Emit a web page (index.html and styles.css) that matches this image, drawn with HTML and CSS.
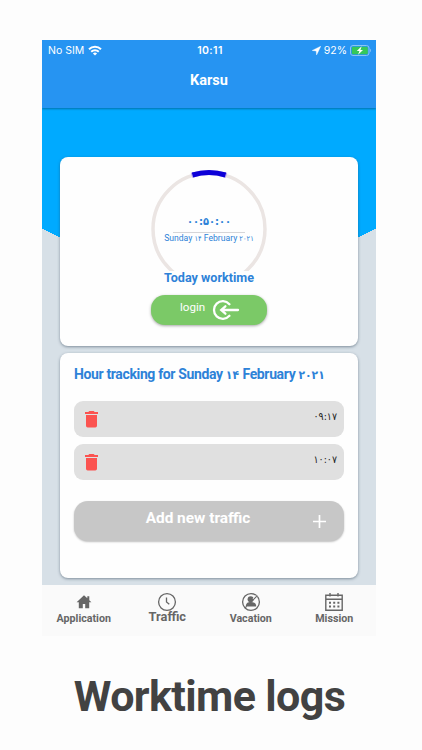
FILE: index.html
```html
<!DOCTYPE html>
<html lang="en">
  <head>
    <meta charset="UTF-8" />
    <meta name="viewport" content="width=device-width, initial-scale=1.0" />
    <title>Karsu</title>
    <link rel="stylesheet" href="styles.css">
  </head>
  <body>
    <div class="phone">
      <header class="header">
        <div class="status">
          <div class="carrier">
            <span>No SIM</span>
            <svg width="14" height="11" viewBox="0 0 14 11" fill="none" stroke="#fff" stroke-width="2">
              <path d="M1 4.2a8.6 8.6 0 0 1 12 0M3.2 6.7a5.4 5.4 0 0 1 7.6 0" />
              <path d="M7 10.6L4.9 8.5a3 3 0 0 1 4.2 0z" fill="#fff" stroke="none" />
            </svg>
          </div>
          <span class="clock">10:11</span>
          <div class="power">
            <svg width="9" height="9" viewBox="0 0 9 9"><path d="M8.8.2L.2 4.5l4 .4.4 4z" fill="#fff" stroke="#fff" stroke-width=".4" /></svg>
            <span>92%</span>
            <svg width="22" height="11" viewBox="0 0 22 11">
              <rect x=".5" y=".5" width="18.5" height="10" rx="2.5" fill="none" stroke="#8cc4f5" />
              <rect x="1.8" y="1.8" width="16" height="7.4" rx="1.2" fill="#35c759" />
              <path d="M20 3.8c1.2.3 1.2 3.1 0 3.4z" fill="#8cc4f5" />
              <path d="M11.7 1.2L6.8 6h2.6l-1.3 3.8L13 5h-2.6z" fill="#fff" />
            </svg>
          </div>
        </div>
        <h1 class="title">Karsu</h1>
      </header>
      <main class="content">
        <section class="card today">
          <div class="dial">
            <svg class="ring" width="118" height="102" viewBox="0 0 118 102" fill="none">
              <circle cx="59" cy="60" r="56" stroke="#ebe5e3" stroke-width="3.5" />
              <path d="M41.5 6.3A56.5 56.5 0 0 1 76.5 6.3" stroke="#b9a5ee" stroke-width="5" />
              <path d="M42.5 6A56.5 56.5 0 0 1 75.5 6" stroke="#0d00d8" stroke-width="5" />
            </svg>
            <div class="reading">
              <div class="timer fa">۰۰:۵۰:۰۰</div>
              <div class="date">Sunday <span class="fa">۱۴</span> February <span class="fa">۲۰۲۱</span></div>
            </div>
          </div>
          <h2 class="caption">Today worktime</h2>
          <button class="login">
            <span>login</span>
            <svg width="28" height="20" viewBox="0 0 28 20" fill="none" stroke="#fff" stroke-width="2.3" stroke-linecap="round">
              <path d="M17.4 15.8A8.8 8.8 0 1 1 17.4 4.2" />
              <path d="M26 10H9.4M13.4 6.3L9.2 10l4.2 3.7" />
            </svg>
          </button>
        </section>
        <section class="card tracking">
          <h2 class="heading">Hour tracking for Sunday <span class="fa">۱۴</span> February <span class="fa">۲۰۲۱</span></h2>
          <ul class="logs">
            <li class="log">
              <svg width="13" height="17" viewBox="0 0 13 17" fill="#fb5350"><path d="M0 1h3.3L4.3 0h4.4l1 1H13v2H0zM1 4h11v10.7A1.7 1.7 0 0 1 10.3 16.4H2.7A1.7 1.7 0 0 1 1 14.7z" /></svg>
              <span class="fa">۰۹:۱۷</span>
            </li>
            <li class="log">
              <svg width="13" height="17" viewBox="0 0 13 17" fill="#fb5350"><path d="M0 1h3.3L4.3 0h4.4l1 1H13v2H0zM1 4h11v10.7A1.7 1.7 0 0 1 10.3 16.4H2.7A1.7 1.7 0 0 1 1 14.7z" /></svg>
              <span class="fa">۱۰:۰۷</span>
            </li>
          </ul>
          <button class="add">
            <span>Add new traffic</span>
            <svg width="13" height="13" viewBox="0 0 13 13" stroke="#fff" stroke-width="1.7"><path d="M6.5 0v13M0 6.5h13" /></svg>
          </button>
        </section>
      </main>
      <nav class="tabs">
        <a class="tab">
          <svg width="20" height="20" viewBox="0 0 20 20" fill="#666"><path d="M10 3.2L2.6 10.2h2.2V16.3h4v-4.4h2.4v4.4h4v-6.1h2.2L15.3 8.2V4.2h-2v2.1z" /></svg>
          <span>Application</span>
        </a>
        <a class="tab current">
          <svg width="20" height="20" viewBox="0 0 20 20" fill="none" stroke="#666" stroke-width="1.3"><circle cx="10" cy="10" r="8.4" /><path d="M9.5 5.4V10l2.8 2.3" /></svg>
          <span>Traffic</span>
        </a>
        <a class="tab">
          <svg width="20" height="20" viewBox="0 0 20 20" fill="#666">
            <circle cx="10" cy="10" r="8.4" fill="none" stroke="#666" stroke-width="1.3" />
            <circle cx="9.6" cy="7.3" r="3" />
            <path d="M4.8 14.6c0-3.4 1.9-4.6 5.2-4.6s5.2 1.2 5.2 4.6z" />
            <path d="M15.8 4.2L12.4 7.6" stroke="#fafafa" stroke-width="2.4" />
            <path d="M15.8 4.2L11.6 8.4M5.6 14.4l-1.4 1.4" stroke="#666" stroke-width="1.2" />
          </svg>
          <span>Vacation</span>
        </a>
        <a class="tab">
          <svg width="20" height="20" viewBox="0 0 20 20" fill="none" stroke="#666" stroke-width="1.4">
            <path d="M1.8 3.3h16.4v14.9H1.8zM1.8 7.3h16.4M6 1v3.4M14 1v3.4" />
            <path d="M5 10.8h10.5M5 14.4h10.5" stroke-width="2" stroke-dasharray="2 2.2" />
          </svg>
          <span>Mission</span>
        </a>
      </nav>
    </div>
    <p class="slogan">Worktime logs</p>
  </body>
</html>
```

FILE: styles.css
```css
* {
  box-sizing: border-box;
}
body {
  margin: 0;
  padding-top: 40px;
  height: 750px;
  overflow: hidden;
  background: #fdfdfd;
  font-family: Roboto, 'DejaVu Sans', sans-serif;
}
h1,
h2,
p,
ul {
  margin: 0;
  padding: 0;
}
ul {
  list-style-type: none;
}
button {
  border: 0;
  padding: 0;
  color: #fff;
  font-family: inherit;
}
svg {
  display: block;
  flex: none;
}
.fa {
  font-family: 'DejaVu Sans Condensed', 'DejaVu Sans', sans-serif;
  font-stretch: condensed;
}
.phone {
  display: flex;
  flex-direction: column;
  width: 334px;
  height: 596px;
  margin-left: 42px;
}
.header {
  z-index: 1;
  height: 68px;
  background: #2694f2;
  box-shadow: 0 1px 2px rgba(0, 0, 0, 0.35);
  clip-path: inset(0 0 -4px 0);
  color: #fff;
}
.status {
  display: grid;
  grid-template-columns: 1fr auto 1fr;
  align-items: center;
  height: 20px;
  padding: 0 4px 0 6px;
  font-family: Inter, sans-serif;
  font-size: 10.5px;
}
.carrier,
.power {
  display: flex;
  align-items: center;
  gap: 4px;
}
.power {
  justify-content: flex-end;
  gap: 3px;
}
.clock {
  font-weight: 600;
  letter-spacing: 0.4px;
}
.title {
  margin-top: 12px;
  font-size: 14.5px;
  font-weight: 700;
  line-height: 18px;
  text-align: center;
}
.content {
  flex: 1;
  display: flex;
  flex-direction: column;
  gap: 7px;
  padding: 49px 18px 0;
  background: conic-gradient(from -63.4deg at 50% 204px, #00aaff 126.8deg, #d7e0e7 0);
}
.card {
  border-radius: 8px;
  background: #fefefe;
  box-shadow: 0 1px 3px rgba(40, 60, 80, 0.5);
}
.today {
  display: flex;
  flex-direction: column;
  align-items: center;
  height: 189px;
  padding-top: 12px;
}
.dial {
  display: grid;
  height: 102px;
}
.ring,
.reading {
  grid-area: 1 / 1;
}
.reading {
  padding-top: 42px;
  color: #2d82d8;
  text-align: center;
}
.timer {
  width: 72px;
  margin: 0 auto;
  border-bottom: 1px solid #d5d5d8;
  font-size: 11px;
  font-weight: 700;
  line-height: 21px;
}
.date {
  font-size: 8.6px;
  line-height: 10px;
  white-space: nowrap;
}
.date .fa {
  font-size: 7.5px;
}
.caption {
  color: #2d82d8;
  font-size: 12.6px;
  font-weight: 700;
  line-height: 13px;
}
.login {
  display: flex;
  align-items: center;
  gap: 7px;
  width: 116px;
  height: 30px;
  margin-top: 11px;
  padding-left: 29px;
  border-radius: 14px;
  background: #7bc967;
  box-shadow: 0 1px 3px rgba(0, 0, 0, 0.35);
  font-size: 11.6px;
}
.login span {
  margin-bottom: 6px;
}
.tracking {
  height: 225px;
  padding: 12px 14px 0;
}
.heading {
  height: 18px;
  color: #2d82d8;
  font-size: 14px;
  font-weight: 700;
  letter-spacing: -0.36px;
  line-height: 18px;
  white-space: nowrap;
}
.heading .fa {
  font-size: 12px;
  letter-spacing: -1px;
}
.logs {
  display: flex;
  flex-direction: column;
  gap: 7px;
  margin-top: 18px;
}
.log {
  display: flex;
  align-items: center;
  justify-content: space-between;
  height: 36px;
  padding: 0 7px 0 11px;
  border-radius: 9px;
  background: #e0e0e0;
  color: #222;
  font-size: 10.5px;
}
.log span {
  margin-bottom: 7px;
}
.add {
  display: flex;
  align-items: center;
  width: 100%;
  height: 40px;
  margin-top: 21px;
  padding: 0 18px 0 0;
  border-radius: 14px;
  background: #c7c7c7;
  box-shadow: 0 1px 2px rgba(0, 0, 0, 0.25);
  font-size: 15.4px;
  font-weight: 700;
}
.add span {
  flex: 1;
  margin-bottom: 6px;
  padding-left: 9px;
}
.tabs {
  display: grid;
  grid-template-columns: repeat(4, 1fr);
  height: 51px;
  padding-top: 7px;
  background: #fafafa;
}
.tab {
  display: flex;
  flex-direction: column;
  align-items: center;
  color: #666;
  font-size: 10.7px;
  font-weight: 700;
  line-height: 14px;
}
.tab.current {
  font-size: 12.8px;
  line-height: 10px;
}
.slogan {
  margin-top: 33px;
  padding-right: 3px;
  color: #424242;
  font-size: 43px;
  font-weight: 700;
  letter-spacing: -0.62px;
  line-height: 54px;
  text-align: center;
}
```
